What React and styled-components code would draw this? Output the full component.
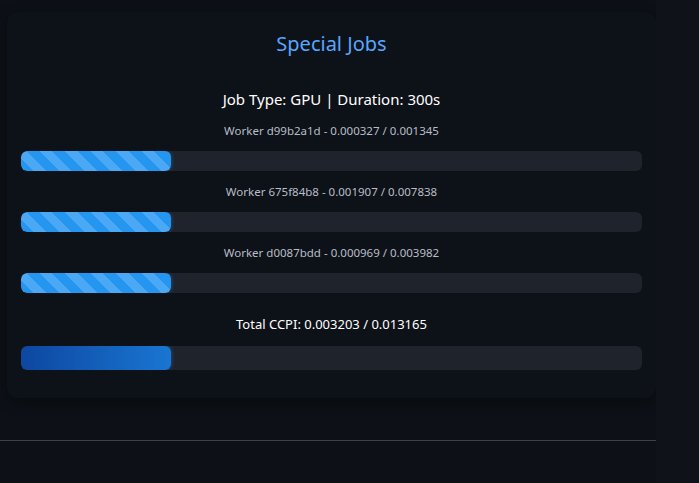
import React from "react";
import styled, { createGlobalStyle } from "styled-components";

const Global = createGlobalStyle`
  body { margin: 0; background: #0d1117; font-family: "Noto Sans", "Open Sans", sans-serif; }
`;

const Page = styled.div`
  display: flex;
  height: 483px;
`;

const Main = styled.div`
  width: 656px;
  display: flex;
  flex-direction: column;
`;

const Side = styled.div`
  flex: 1;
  background: #0f1319;
`;

const Card = styled.section`
  margin: 12px 0 0 7px;
  width: 621px;
  padding: 18px 14px 28px;
  background: #0d1118;
  border-radius: 10px;
  box-shadow: 0 4px 14px rgba(0, 0, 0, 0.45);
  display: flex;
  flex-direction: column;
  align-items: stretch;
`;

const Title = styled.h2`
  margin: 0 0 32px;
  text-align: center;
  font-size: 20px;
  font-weight: 400;
  color: #58a6ff;
`;

const JobType = styled.div`
  text-align: center;
  color: #fff;
  font-size: 15px;
  margin-bottom: 14px;
`;

const Label = styled.div`
  text-align: center;
  color: #b8bec7;
  font-size: 11.5px;
  margin-bottom: 13px;
`;

const TotalLabel = styled.div`
  text-align: center;
  color: #fff;
  font-size: 13px;
  margin: 9px 0 13px;
`;

const Track = styled.div`
  height: ${(p) => (p.$big ? 24 : 20)}px;
  background: #1f232b;
  border-radius: 6px;
  overflow: hidden;
  margin-bottom: ${(p) => (p.$big ? 0 : 13)}px;
`;

const Fill = styled.div`
  height: 100%;
  border-radius: 6px;
  background: ${(p) =>
    p.$big
      ? "linear-gradient(90deg, #0d47a1, #1976d2)"
      : "repeating-linear-gradient(45deg, #2496f0 0 9px, #4aa8f5 9px 18px)"};
  box-shadow: 0 0 4px rgba(40, 140, 240, 0.5);
`;

const workers = [
  ["d99b2a1d", "0.000327", "0.001345"],
  ["675f84b8", "0.001907", "0.007838"],
  ["d0087bdd", "0.000969", "0.003982"],
];

const Divider = styled.hr`
  margin: 42px 0 0;
  border: 0;
  border-top: 1px solid #3d4249;
`;

export default function App() {
  return (
    <Page>
      <Global />
      <Main>
        <Card>
          <Title>Special Jobs</Title>
          <JobType>Job Type: GPU | Duration: 300s</JobType>
          {workers.map(([id, a, b]) => (
            <React.Fragment key={id}>
              <Label>
                Worker {id} - {a} / {b}
              </Label>
              <Track>
                <Fill style={{ width: "24.2%" }} />
              </Track>
            </React.Fragment>
          ))}
          <TotalLabel>Total CCPI: 0.003203 / 0.013165</TotalLabel>
          <Track $big>
            <Fill $big style={{ width: "24.2%" }} />
          </Track>
        </Card>
        <Divider />
      </Main>
      <Side />
    </Page>
  );
}
